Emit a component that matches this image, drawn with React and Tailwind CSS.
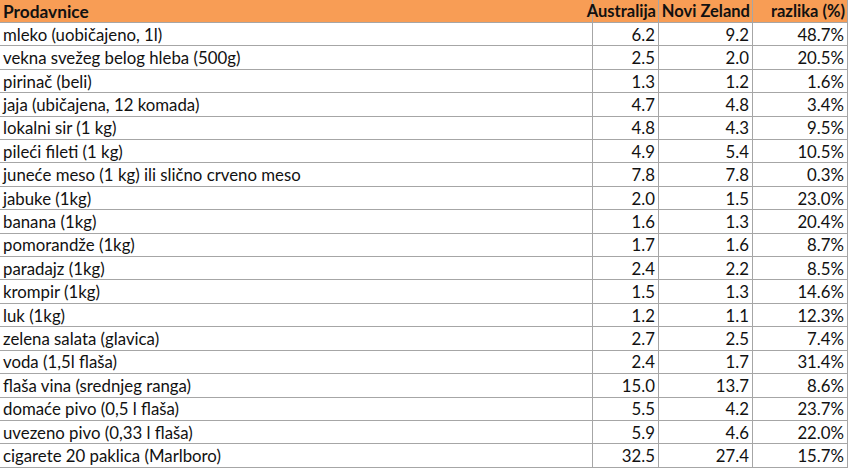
import React from 'react';

const rows = [
    ['mleko (uobičajeno, 1l)', '6.2', '9.2', '48.7%'],
    ['vekna svežeg belog hleba (500g)', '2.5', '2.0', '20.5%'],
    ['pirinač (beli)', '1.3', '1.2', '1.6%'],
    ['jaja (ubičajena, 12 komada)', '4.7', '4.8', '3.4%'],
    ['lokalni sir (1 kg)', '4.8', '4.3', '9.5%'],
    ['pileći fileti (1 kg)', '4.9', '5.4', '10.5%'],
    ['juneće meso (1 kg) ili slično crveno meso', '7.8', '7.8', '0.3%'],
    ['jabuke (1kg)', '2.0', '1.5', '23.0%'],
    ['banana (1kg)', '1.6', '1.3', '20.4%'],
    ['pomorandže (1kg)', '1.7', '1.6', '8.7%'],
    ['paradajz (1kg)', '2.4', '2.2', '8.5%'],
    ['krompir (1kg)', '1.5', '1.3', '14.6%'],
    ['luk (1kg)', '1.2', '1.1', '12.3%'],
    ['zelena salata (glavica)', '2.7', '2.5', '7.4%'],
    ['voda (1,5l flaša)', '2.4', '1.7', '31.4%'],
    ['flaša vina (srednjeg ranga)', '15.0', '13.7', '8.6%'],
    ['domaće pivo (0,5 l flaša)', '5.5', '4.2', '23.7%'],
    ['uvezeno pivo (0,33 l flaša)', '5.9', '4.6', '22.0%'],
    ['cigarete 20 paklica (Marlboro)', '32.5', '27.4', '15.7%'],
];

const App = () => {
    return (
        <div className="w-[850px] h-[469px] bg-white overflow-hidden font-['Lato',sans-serif] text-[16.8px] text-[#111] leading-none">
            <div className="w-[848px] grid grid-cols-[592px_66px_94px_96px] grid-rows-[23px_repeat(19,23.42px)]">
                {/* header */}
                <div className="bg-[#f89d55] font-bold flex items-center pl-[3px] pt-[1px] border-b border-[#a6a6a6] text-[17.3px]">Prodavnice</div>
                <div className="bg-[#f89d55] font-bold flex items-center justify-end pr-[2px] pt-[1px] border-l border-b border-[#a6a6a6] text-[16.5px]">Australija</div>
                <div className="bg-[#f89d55] font-bold flex items-center justify-end pr-[2px] pt-[1px] border-l border-b border-[#a6a6a6] text-[16.5px]">Novi Zeland</div>
                <div className="bg-[#f89d55] font-bold flex items-center justify-end pr-[2px] pt-[1px] border-l border-r border-b border-[#a6a6a6] text-[16.5px]">razlika (%)</div>

                {rows.map((r, i) => (
                    <React.Fragment key={i}>
                        <div className="flex items-center pl-[3px] pt-[2px] border-b border-[#a6a6a6] whitespace-nowrap">{r[0]}</div>
                        <div className="flex items-center justify-end pr-[3px] pt-[2px] border-l border-b border-[#a6a6a6]">{r[1]}</div>
                        <div className="flex items-center justify-end pr-[3px] pt-[2px] border-l border-b border-[#a6a6a6]">{r[2]}</div>
                        <div className="flex items-center justify-end pr-[3px] pt-[2px] border-l border-r border-b border-[#a6a6a6]">{r[3]}</div>
                    </React.Fragment>
                ))}
            </div>
        </div>
    );
};

export default App;
